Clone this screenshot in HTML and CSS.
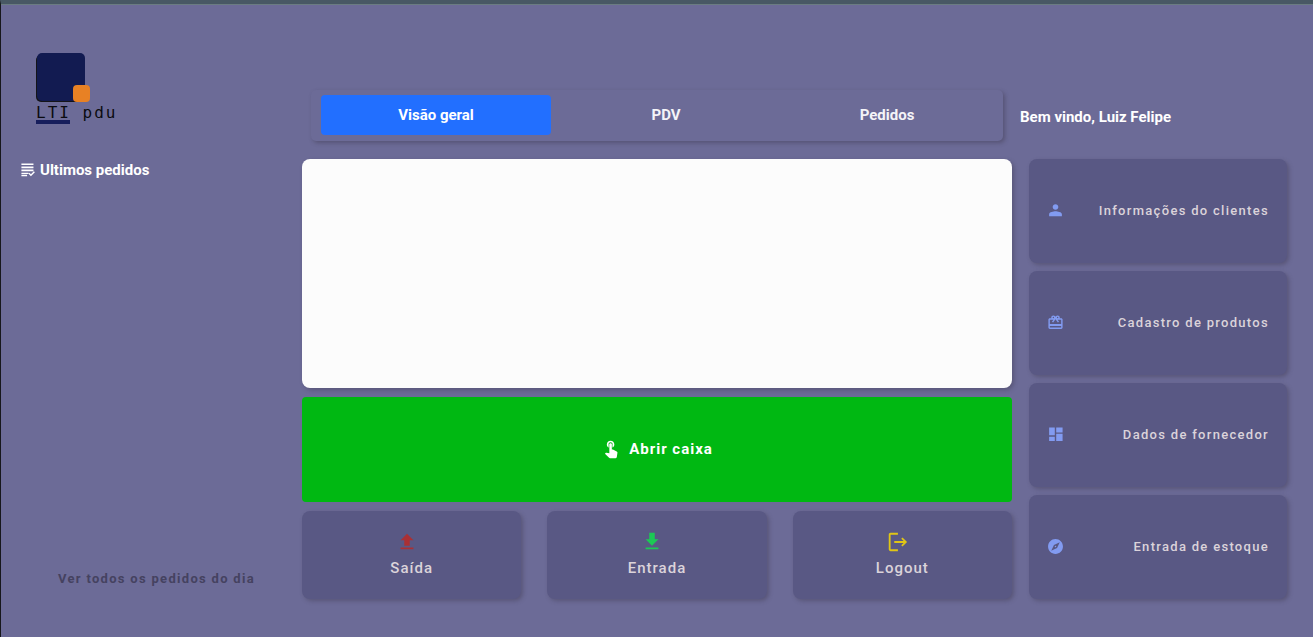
FILE: index.html
```html
<!DOCTYPE html>
<html lang="pt-BR">
<head>
<meta charset="utf-8">
<title>LTI pdv</title>
<link rel="stylesheet" href="styles.css">
</head>
<body>
<div class="page">
  <header class="header">
    <a class="brand" href="#">
      <svg width="86" height="74" viewBox="0 0 86 74">
        <rect x="0" y="2" width="47" height="47" rx="5" fill="#141519"/>
        <rect x="1" y="0" width="48" height="48" rx="5" fill="#121b51"/>
        <rect x="37" y="32" width="17" height="17" rx="4" fill="#e88124"/>
        <text class="brand-text" x="0" y="65">LTI pdu</text>
        <rect x="0" y="67" width="34" height="4" fill="#171e5c"/>
      </svg>
    </a>
    <nav class="tabs">
      <button class="tab tab-active" type="button">Visão geral</button>
      <button class="tab" type="button">PDV</button>
      <button class="tab" type="button">Pedidos</button>
    </nav>
    <p class="welcome">Bem vindo, Luiz Felipe</p>
  </header>
  <main class="main">
    <aside class="orders">
      <h2 class="orders-title">
        <svg width="17" height="17" viewBox="0 0 24 24" fill="currentColor"><path d="M19 2H2v2.400h17V2zm0 4.300H2v2.400h17V6.300zm0 4.300H2v2.400h17v-2.400zM2 20h8v-2H2v2zm0-5h10v2H2zM21 14.400l-5.600 5.600-3.400-3.400 1.400-1.400 2 2 4.200-4.200z"/></svg>
        Ultimos pedidos
      </h2>
      <a class="orders-link" href="#">Ver todos os pedidos do dia</a>
    </aside>
    <section class="center">
      <div class="panel"></div>
      <button class="open" type="button">
        <svg width="20" height="20" viewBox="0 0 24 24" fill="currentColor"><path fill-opacity=".5" d="M9 10.240V6.500h5v3.740l-1-.5V6h-3v4z"/><path d="M9 10.240V6.500C9 5.120 10.120 4 11.500 4S14 5.120 14 6.500v3.740c1.210-.81 2-2.180 2-3.740C16 4.010 13.990 2 11.500 2S7 4.010 7 6.500c0 1.560.79 2.930 2 3.740zm9.840 4.630l-4.540-2.260c-.17-.07-.35-.11-.54-.11H13v-6c0-.83-.67-1.500-1.500-1.500S10 5.670 10 6.500v10.740l-3.430-.72c-.08-.01-.15-.03-.24-.03-.31 0-.59.13-.79.33l-.79.8 4.940 4.940c.27.27.65.44 1.060.44h6.790c.75 0 1.330-.55 1.440-1.280l.75-5.270c.01-.07.02-.14.02-.2 0-.62-.38-1.160-.91-1.380z"/></svg>
        Abrir caixa
      </button>
      <div class="actions">
        <button class="card action" type="button">
          <svg class="icon-out" width="22" height="22" viewBox="0 0 24 24" fill="currentColor"><path d="M9 16h6v-6h4l-7-7-7 7h4zM5 18h14v2H5z"/></svg>
          <span>Saída</span>
        </button>
        <button class="card action" type="button">
          <svg class="icon-in" width="22" height="22" viewBox="0 0 24 24" fill="currentColor"><path d="M19 9h-4V2H9v7H5l7 7 7-7zM5 18v2h14v-2H5z"/></svg>
          <span>Entrada</span>
        </button>
        <button class="card action" type="button">
          <svg class="icon-logout" width="22" height="22" viewBox="0 0 24 24" fill="currentColor"><path d="M18 7l-1.400 1.400L19.200 11H9v2h10.200l-2.600 2.600L18 17l5-5zM5 4h8V2H5c-1.100 0-2 .9-2 2v16c0 1.100.9 2 2 2h8v-2H5V4z"/></svg>
          <span>Logout</span>
        </button>
      </div>
    </section>
    <section class="menu">
      <button class="card menu-item" type="button">
        <svg width="17" height="17" viewBox="0 0 24 24" fill="currentColor"><path d="M12 11c2.210 0 4-1.790 4-4s-1.790-4-4-4-4 1.790-4 4 1.790 4 4 4zm0 2c-2.670 0-9 1.340-9 4v3h18v-3c0-2.660-6.330-4-9-4z"/></svg>
        <span>Informações do clientes</span>
      </button>
      <button class="card menu-item" type="button">
        <svg width="17" height="17" viewBox="0 0 24 24" fill="currentColor"><path d="M20 6h-2.180c.11-.31.18-.65.18-1 0-1.660-1.340-3-3-3-1.050 0-1.960.54-2.500 1.350l-.5.670-.5-.68C10.960 2.540 10.050 2 9 2 7.340 2 6 3.340 6 5c0 .35.070.69.180 1H4c-1.110 0-1.990.89-1.990 2L2 19c0 1.110.89 2 2 2h16c1.110 0 2-.89 2-2V8c0-1.110-.89-2-2-2zm-5-2c.55 0 1 .45 1 1s-.45 1-1 1-1-.45-1-1 .45-1 1-1zM9 4c.55 0 1 .45 1 1s-.45 1-1 1-1-.45-1-1 .45-1 1-1zm11 15H4v-2h16v2zm0-5H4V8h5.080L7 10.830 8.620 12 11 8.760l1-1.360 1 1.360L15.380 12 17 10.830 14.920 8H20v6z"/></svg>
        <span>Cadastro de produtos</span>
      </button>
      <button class="card menu-item" type="button">
        <svg width="17" height="17" viewBox="0 0 24 24" fill="currentColor"><path d="M3 2h8v11H3zM3 15h8v6H3zM13 11h9v10h-9zM13 2v7h9V2z"/></svg>
        <span>Dados de fornecedor</span>
      </button>
      <button class="card menu-item" type="button">
        <svg width="17" height="17" viewBox="0 0 24 24" fill="currentColor"><path d="M12 10.900c-.61 0-1.100.49-1.100 1.100s.49 1.100 1.100 1.100c.61 0 1.100-.49 1.100-1.100s-.49-1.100-1.100-1.100zM12 1.500C6.200 1.500 1.500 6.200 1.500 12S6.200 22.500 12 22.500 22.500 17.800 22.500 12 17.800 1.500 12 1.500zm2.190 12.690L6 18l3.810-8.190L18 6l-3.810 8.190z"/></svg>
        <span>Entrada de estoque</span>
      </button>
    </section>
  </main>
</div>
</body>
</html>
```
FILE: styles.css
```css
* { box-sizing: border-box; }

body {
  margin: 0;
  background: #6c6b97;
  color: #fff;
  font-family: Roboto, sans-serif;
}

button {
  border: 0;
  margin: 0;
  font-family: inherit;
  cursor: pointer;
}

svg { display: block; flex: none; }

.page {
  display: flex;
  flex-direction: column;
  min-height: 100vh;
  padding-bottom: 38px;
  border-left: 1px solid #17171c;
  border-top: 4px solid #485864;
}

.header,
.main {
  display: grid;
  grid-template-columns: 265fr 710fr 258fr;
  column-gap: 17px;
  padding: 0 26px 0 19px;
}

.header {
  align-items: end;
  padding-top: 48px;
  padding-bottom: 18px;
  border-top: 1px solid #6b7c82;
}

.brand { padding: 0 0 14px 16px; }

.brand-text {
  font-family: "DejaVu Sans Mono", monospace;
  font-size: 16px;
  letter-spacing: 2px;
  fill: #0b0b10;
}

.tabs {
  display: grid;
  grid-template-columns: 230fr 230fr 212fr;
  margin: 0 9px;
  padding: 5px 10px 6px;
  border-radius: 5px;
  box-shadow: 2px 2px 4px rgba(60, 55, 75, 0.45);
}

.tab {
  height: 40px;
  border-radius: 4px;
  background: none;
  color: #f4f4f8;
  font-size: 15px;
  font-weight: 700;
}

.tab-active { background: #226fff; color: #fff; }

.welcome {
  margin: 0 0 14px -9px;
  font-size: 15px;
  font-weight: 700;
  line-height: 20px;
}

.main { flex: 1; }

.orders {
  display: flex;
  flex-direction: column;
  justify-content: space-between;
}

.orders-title {
  display: flex;
  align-items: center;
  gap: 3px;
  margin: 0;
  font-size: 15px;
  line-height: 22px;
}

.orders-link {
  padding: 0 0 13px 38px;
  color: #454260;
  font-size: 13px;
  font-weight: 700;
  letter-spacing: 0.1em;
  text-decoration: none;
}

.center {
  display: grid;
  grid-template-rows: 229fr 105fr 88fr;
  gap: 9px;
}

.panel {
  border-radius: 8px;
  background: #fcfcfc;
  box-shadow: 2px 2px 4px rgba(60, 55, 75, 0.4);
}

.open {
  display: flex;
  align-items: center;
  justify-content: center;
  gap: 8px;
  padding: 0 6px 2px;
  border-radius: 4px;
  background: #00b812;
  color: #fff;
  font-size: 15px;
  font-weight: 700;
  letter-spacing: 1px;
}

.actions {
  display: grid;
  grid-template-columns: repeat(3, 1fr);
  gap: 26px;
}

.card {
  border-radius: 8px;
  background: #595884;
  color: #dbd3da;
  font-weight: 500;
  letter-spacing: 0.1em;
  box-shadow: 2px 2px 4px rgba(60, 55, 75, 0.4);
}

.action {
  display: flex;
  flex-direction: column;
  align-items: center;
  justify-content: center;
  gap: 6px;
  padding: 0 6px 2px;
  font-size: 15px;
  letter-spacing: 1px;
}

.action svg { margin-right: 10px; }

.icon-out { color: #aa3034; }
.icon-in { color: #1cc955; }
.icon-logout { color: #e0c516; }

.menu {
  display: grid;
  grid-template-rows: repeat(4, 1fr);
  gap: 8px;
}

.menu-item {
  display: flex;
  align-items: center;
  justify-content: space-between;
  padding: 0 18px 1px;
  font-size: 13px;
}

.menu-item svg { color: #829bf1; }
```
